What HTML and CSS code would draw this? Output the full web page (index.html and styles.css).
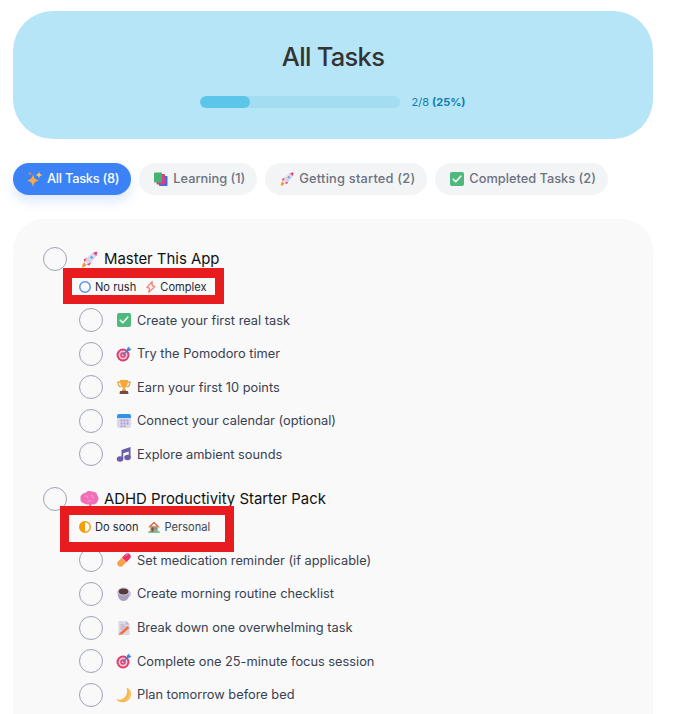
FILE: index.html
```html
<!DOCTYPE html>
<html lang="en">
<head>
<meta charset="utf-8">
<title>All Tasks</title>
<link rel="stylesheet" href="styles.css">
</head>
<body>
<svg class="defs" aria-hidden="true">
  <symbol id="i-sparkles" viewBox="0 0 32 32"><path fill="#f9a945" d="M12 6c1.800 8 4 11 12 13-8 2-10.200 4.500-12 13-1.800-8.500-4-11-12-13 8-2 10.200-5 12-13z"/><path fill="#fcc75f" d="M24 1c1 4.600 2.400 6 7 7-4.600 1-6 2.400-7 7-1-4.600-2.400-6-7-7 4.600-1 6-2.400 7-7z"/><path fill="#f08a3c" d="M6 1c.6 2.600 1.400 3.400 4 4-2.600.6-3.400 1.400-4 4-.6-2.600-1.400-3.400-4-4 2.600-.6 3.400-1.400 4-4z"/></symbol>
  <symbol id="i-books" viewBox="0 0 32 32"><rect x="12" y="10" width="17" height="20" rx="1.500" fill="#3a72d8"/><rect x="7" y="6" width="17" height="21" rx="1.500" fill="#cf4390"/><rect x="2" y="3" width="16" height="20" rx="1.500" fill="#45b56e"/></symbol>
  <symbol id="i-rocket" viewBox="0 0 32 32"><path fill="#f59a3e" d="M4 30c-1-4 0-7 3-9l4 4c-2 3-4 4-7 5z"/><path fill="#ee3f7a" d="M6 16l6-3-4 8zM16 26l3-6-8 4z"/><path fill="#d9d4e3" d="M9 19C12 11 19 5 27 3c1-.2 2 .8 1.800 1.800C27 13 21 20 13 23z"/><path fill="#ee3f7a" d="M22 4.500C24 4 26 3.300 27.500 3c.9-.2 1.700.6 1.500 1.500-.3 1.500-1 3.500-1.500 5.500z"/><circle cx="19.500" cy="12.500" r="3" fill="#5a9fe8" stroke="#f5f2f8" stroke-width="1.200"/></symbol>
  <symbol id="i-check" viewBox="0 0 32 32"><rect x="2" y="2" width="28" height="28" rx="4" fill="#4eb87d"/><path d="M8.500 16.500l5 5 10-11" fill="none" stroke="#e9fbf0" stroke-width="3.500" stroke-linecap="round" stroke-linejoin="round"/></symbol>
  <symbol id="i-target" viewBox="0 0 32 32"><circle cx="14" cy="18" r="13" fill="#dd3f6e"/><circle cx="14" cy="18" r="9" fill="#f3c3d2"/><circle cx="14" cy="18" r="5.500" fill="#dd3f6e"/><circle cx="14" cy="18" r="2.500" fill="#f3c3d2"/><path d="M14 18L25 7" stroke="#3f7fc8" stroke-width="2.500"/><path fill="#2f8be6" d="M22 5l4-4 1 4 4 1-4 4-5-.5z"/></symbol>
  <symbol id="i-trophy" viewBox="0 0 32 32"><path fill="none" stroke="#e89a2c" stroke-width="2.500" d="M9 6H4c0 6 2 9 6 10M23 6h5c0 6-2 9-6 10"/><path fill="#f5a83a" d="M8 2h16c0 9-2 14-6 16v3h-4v-3C10 16 8 11 8 2z"/><rect x="12" y="21" width="8" height="3" fill="#d18a34"/><path fill="#7a4a3f" d="M8 24h16l1 6H7z"/></symbol>
  <symbol id="i-calendar" viewBox="0 0 32 32"><rect x="2" y="2" width="28" height="28" rx="4" fill="#dcd7ee"/><path fill="#2f93ea" d="M2 10V6a4 4 0 014-4h20a4 4 0 014 4v4z"/><path fill="#a7a3c6" d="M9 13h4v4H9zM15 13h4v4h-4zM21 13h4v4h-4zM9 19h4v4H9zM15 19h4v4h-4zM21 19h4v4h-4zM15 25h4v3h-4zM9 25h4v3H9z"/></symbol>
  <symbol id="i-music" viewBox="0 0 32 32"><path fill="#6c5ba7" d="M11 8L29 2v21h-3.500V11l-11 3.500V27H11z"/><ellipse cx="8" cy="26" rx="6.500" ry="5.500" fill="#6c5ba7"/><ellipse cx="23" cy="23" rx="6.500" ry="5.500" fill="#6c5ba7"/></symbol>
  <symbol id="i-pill" viewBox="0 0 32 32"><path fill="#f9a04e" d="M4 19l8-8 9 9-8 8a6.400 6.400 0 01-9-9z"/><path fill="#ee2f66" d="M12 11l7-7a6.400 6.400 0 019 9l-7 7z"/><path d="M20 7l3-2" stroke="#f9a3bd" stroke-width="2" stroke-linecap="round"/></symbol>
  <symbol id="i-coffee" viewBox="0 0 32 32"><path fill="none" stroke="#cfc8d8" stroke-width="3" d="M26 12c4 0 4 8-2 10"/><path fill="#ab9fbd" d="M3 11h24c0 10-3 19-12 19S3 21 3 11z"/><ellipse cx="15" cy="11" rx="12" ry="8" fill="#c9c0d2"/><ellipse cx="15" cy="11" rx="9.500" ry="6" fill="#543a3a"/></symbol>
  <symbol id="i-memo" viewBox="0 0 32 32"><path fill="#dcd7e3" d="M5 2h15l7 7v21H5z"/><path fill="#b9b2c6" d="M20 2l7 7h-7z"/><path stroke="#aaa2b8" stroke-width="1.500" d="M9 10h8M9 14h12M9 18h6"/><path stroke="#f56f3a" stroke-width="5" d="M9 28L25 14"/><path fill="#e9a27c" d="M5 31l1-6 4 4z"/></symbol>
  <symbol id="i-moon" viewBox="0 0 32 32"><path fill="#f7b54b" d="M21 1c8 3 11 11 8 19S17 32 9 30c-4-1-7-3-8-6 7 3 14 1 18-5s4-12 2-18z"/><path fill="#fbd27a" d="M23 4c5 4 7 10 4 16S16 29 9 28c7 0 13-3 16-9s1-11-2-15z"/></symbol>
  <symbol id="i-brain" viewBox="0 0 32 32"><path fill="#f26fb8" d="M10 4c3-3 8-3 11-1 4-1 8 2 8 6 3 3 3 8 0 11-1 3-5 5-9 4l-2 4c-1 1-3 1-3-1v-3c-3 1-7 0-9-2-4 0-6-5-5-8-1-4 2-8 9-10z"/><path fill="none" stroke="#f9aad6" stroke-width="1.500" d="M8 10c3-1 5 1 5 3M20 8c-1 3 1 5 4 5M13 20c1-2 4-3 6-1"/></symbol>
  <symbol id="i-house" viewBox="0 0 32 32"><rect x="1" y="27" width="30" height="4" rx="1" fill="#3fb56a"/><rect x="6" y="13" width="20" height="15" fill="#c59a7c"/><path fill="#e4673a" d="M16 2L1 16l2 2L16 6l13 12 2-2z"/><path fill="#e4673a" d="M16 6L6 15V11l10-8 10 8v4z"/><rect x="9" y="17" width="6" height="11" fill="#7b5240"/><rect x="18" y="17" width="6" height="6" fill="#3aa7c4"/></symbol>
  <symbol id="i-half" viewBox="0 0 16 16"><circle cx="8" cy="8" r="7" fill="#fff" stroke="#f59e0b" stroke-width="2"/><path fill="#f59e0b" d="M8 1a7 7 0 010 14z" transform="rotate(180 8 8)"/></symbol>
  <symbol id="i-ring" viewBox="0 0 16 16"><circle cx="8" cy="8" r="7" fill="none" stroke="#5b92f0" stroke-width="2"/></symbol>
  <symbol id="i-bolt" viewBox="0 0 16 16"><path fill="none" stroke="#f87f72" stroke-width="1.700" stroke-linejoin="round" d="M9.500 1L2.500 8.500 6 9.500 5 15l8-7.500-3.500-1.200z"/></symbol>
</svg>

<main class="page">
  <header class="hero">
    <h1 class="hero-title">All Tasks</h1>
    <div class="hero-progress">
      <div class="bar"><div class="bar-fill" style="width:25%"></div></div>
      <span class="bar-label">2/8 <b>(25%)</b></span>
    </div>
  </header>

  <nav class="tabs">
    <button class="tab tab-active"><svg class="emoji"><use href="#i-sparkles"/></svg>All Tasks (8)</button>
    <button class="tab"><svg class="emoji"><use href="#i-books"/></svg>Learning (1)</button>
    <button class="tab tab-wide"><svg class="emoji"><use href="#i-rocket"/></svg>Getting started (2)</button>
    <button class="tab"><svg class="emoji"><use href="#i-check"/></svg>Completed Tasks (2)</button>
  </nav>

  <section class="panel">
    <article class="group">
      <div class="row parent"><span class="circle"></span><svg class="emoji"><use href="#i-rocket"/></svg><span class="parent-text">Master This App</span></div>
      <div class="tags">
        <span class="mark mark-one"></span>
        <span class="tag"><svg class="tag-icon"><use href="#i-ring"/></svg>No rush</span>
        <span class="tag tag-tight"><svg class="tag-icon"><use href="#i-bolt"/></svg>Complex</span>
      </div>
      <ul class="subs">
        <li class="row"><span class="circle"></span><svg class="emoji"><use href="#i-check"/></svg>Create your first real task</li>
        <li class="row"><span class="circle"></span><svg class="emoji"><use href="#i-target"/></svg>Try the Pomodoro timer</li>
        <li class="row"><span class="circle"></span><svg class="emoji"><use href="#i-trophy"/></svg>Earn your first 10 points</li>
        <li class="row"><span class="circle"></span><svg class="emoji"><use href="#i-calendar"/></svg>Connect your calendar (optional)</li>
        <li class="row"><span class="circle"></span><svg class="emoji"><use href="#i-music"/></svg>Explore ambient sounds</li>
      </ul>
    </article>

    <article class="group">
      <div class="row parent"><span class="circle"></span><svg class="emoji"><use href="#i-brain"/></svg><span class="parent-text">ADHD Productivity Starter Pack</span></div>
      <div class="tags">
        <span class="mark mark-two"></span>
        <span class="tag"><svg class="tag-icon"><use href="#i-half"/></svg>Do soon</span>
        <span class="tag tag-muted"><svg class="tag-icon"><use href="#i-house"/></svg>Personal</span>
      </div>
      <ul class="subs">
        <li class="row"><span class="circle"></span><svg class="emoji"><use href="#i-pill"/></svg>Set medication reminder (if applicable)</li>
        <li class="row"><span class="circle"></span><svg class="emoji"><use href="#i-coffee"/></svg>Create morning routine checklist</li>
        <li class="row"><span class="circle"></span><svg class="emoji"><use href="#i-memo"/></svg>Break down one overwhelming task</li>
        <li class="row"><span class="circle"></span><svg class="emoji"><use href="#i-target"/></svg>Complete one 25-minute focus session</li>
        <li class="row"><span class="circle"></span><svg class="emoji"><use href="#i-moon"/></svg>Plan tomorrow before bed</li>
      </ul>
    </article>
  </section>
</main>
</body>
</html>
```
FILE: styles.css
```css
* { box-sizing: border-box; }

html, body {
  margin: 0;
  height: 714px;
  overflow: hidden;
  background: #fff;
}

body {
  font-family: Inter, "Liberation Sans", sans-serif;
  color: #374151;
}

.defs {
  position: absolute;
  width: 0;
  height: 0;
}

.page {
  padding: 11px 25px 0 13px;
}

.hero {
  height: 128px;
  padding-top: 29px;
  border-radius: 40px;
  background: #b5e5f7;
  display: flex;
  flex-direction: column;
  align-items: center;
}

.hero-title {
  margin: 0;
  font-size: 25.5px;
  line-height: 34px;
  font-weight: 500;
  letter-spacing: -0.7px;
  color: #333;
}

.hero-progress {
  margin-top: 21px;
  display: flex;
  align-items: center;
  gap: 12px;
}

.bar {
  width: 200px;
  height: 12px;
  border-radius: 6px;
  background: #a2ddf2;
  overflow: hidden;
}

.bar-fill {
  height: 100%;
  border-radius: 6px;
  background: #5bc5ea;
}

.bar-label {
  width: 55px;
  font-size: 11px;
  line-height: 14px;
  white-space: nowrap;
  color: #0e7fab;
}

.bar-label b {
  font-weight: 700;
}

.tabs {
  margin-top: 24px;
  display: flex;
  gap: 8px;
}

.tab {
  height: 32px;
  padding: 0 12px 2px 14px;
  border: 0;
  border-radius: 16px;
  background: #f3f4f6;
  color: #6b7280;
  font: 500 12.800px Inter, "Liberation Sans", sans-serif;
  display: flex;
  align-items: center;
  gap: 4px;
  white-space: nowrap;
}

.tab .emoji {
  margin-top: 2px;
}

.tab-active {
  background: #3b82f6;
  color: #fff;
  letter-spacing: -0.24px;
  box-shadow: 0 6px 12px rgba(59, 130, 246, 0.18);
}

.tab-wide {
  letter-spacing: 0.22px;
}

.emoji {
  width: 16px;
  height: 16px;
  flex: none;
}

.panel {
  margin-top: 24px;
  height: 495px;
  padding: 28px 30px 0;
  border-radius: 32px 32px 0 0;
  background: #f9f9f9;
}

.group + .group {
  margin-top: 21px;
}

.row {
  display: flex;
  align-items: center;
  height: 24px;
  font-size: 12.800px;
  color: #374151;
}

.circle {
  width: 24px;
  height: 24px;
  flex: none;
  margin-right: 13px;
  border: 1.500px solid #9ca3b4;
  border-radius: 50%;
}

.row .emoji {
  margin-right: 5px;
}

.parent .emoji {
  width: 19px;
  height: 19px;
  margin-right: 5px;
}

.parent-text {
  font-size: 14.900px;
  color: #111;
}

.tags {
  position: relative;
  margin: 7px 0 0 36px;
  height: 18px;
  display: flex;
  align-items: center;
  gap: 9px;
}

.tag {
  display: flex;
  align-items: center;
  gap: 4px;
  font-size: 11.100px;
  color: #1f2937;
}

.tag-tight {
  gap: 3px;
}

.tag-muted {
  gap: 5px;
  color: #3f4654;
}

.tag-icon {
  width: 12px;
  height: 12px;
  flex: none;
}

.mark {
  position: absolute;
  z-index: 2;
  border-style: solid;
  border-color: #e81c1f;
  pointer-events: none;
}

.mark-one {
  left: -16px;
  top: -10px;
  width: 161px;
  height: 36px;
  border-width: 10px 9px 9px;
}

.mark-two {
  left: -19px;
  top: -12px;
  width: 174px;
  height: 46px;
  border-width: 9px 9px 10px;
}

.subs {
  list-style: none;
  margin: 12px 0 0 36px;
  padding: 0;
  display: flex;
  flex-direction: column;
  gap: 9.600px;
}
```
